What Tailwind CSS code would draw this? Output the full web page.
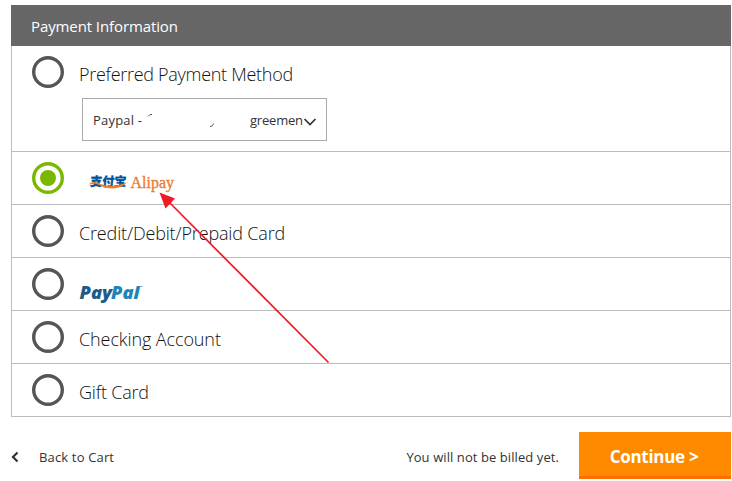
<!DOCTYPE html>
<html lang="en">
<head>
<meta charset="utf-8">
<title>Payment Information</title>
<script src="https://cdn.jsdelivr.net/npm/@tailwindcss/browser@4"></script>
</head>
<body class="relative h-[481px] w-[732px] overflow-hidden bg-white font-['Open_Sans','Noto_Sans',sans-serif] text-[#222]">
<main class="pt-[5px] pl-[11px] w-[731px]">
  <header class="flex h-[41px] items-center bg-[#666] pl-5 pt-0.5 text-[15px] tracking-[-0.1px] text-white"><h1>Payment Information</h1></header>
  <section class="border-x border-[#bcbcbc] text-[18px] font-light text-[#111]">
    <div class="h-[106px] border-b border-[#bcbcbc] pl-5 pt-2.5">
      <label class="flex h-8 items-center gap-[15px]"><svg class="size-8 shrink-0" viewBox="0 0 32 32"><circle cx="16" cy="16" r="14.300" fill="none" stroke="#555" stroke-width="3.400"/></svg><span class="pt-1 tracking-[-0.29px]">Preferred Payment Method</span></label>
      <div class="ml-[50px] mt-2.5 flex h-[43px] w-[245px] items-center border border-[#aaa] pl-2.5 text-[13px] font-normal text-[#333]">
        <span class="w-[54px] shrink-0 whitespace-nowrap pt-0.5 tracking-[0.2px]">Paypal -</span>
        <svg class="h-6 w-[102px] shrink-0" viewBox="0 0 102 24" fill="none" stroke="#555"><path d="M1 8.500l2-2h2M63 18.500c2 0 3-1 3.500-3"/></svg>
        <span class="w-[54px] shrink-0 whitespace-nowrap pl-px pt-0.5 tracking-[-0.2px]">greemen</span>
        <svg class="h-3 w-[14px] shrink-0" viewBox="0 0 14 12" fill="none" stroke="#333" stroke-width="1.700"><path d="M1.500 5l5.500 5.500 5.500-5.500"/></svg>
      </div>
    </div>
    <label class="flex h-[53px] items-start border-b border-[#bcbcbc] pl-5 pt-2.5">
      <svg class="size-8" viewBox="0 0 32 32"><circle cx="16" cy="16" r="14.300" fill="none" stroke="#7ab800" stroke-width="3.400"/><circle cx="16" cy="16" r="8" fill="#7ab800"/></svg>
      <svg class="ml-[25px] mt-[9px] h-[22px] w-[90px]" viewBox="0 0 90 22" role="img" aria-label="Alipay">
        <g transform="translate(2 0) skewX(-4)"><text x="0" y="14.500" font-family="Noto Sans CJK SC" font-size="12.500" font-weight="900" fill="#00529b" stroke="#00529b" stroke-width=".3" textLength="36" lengthAdjust="spacingAndGlyphs">支付宝</text></g>
        <path d="M.5 12.500c3-2.300 7-2 11 .4 8 3 17 2.600 26.500-1.600-6 7.700-19 7.400-27 3.200-4-2-7-2.500-10.500-.7z" fill="#f47b20"/>
        <text x="41.500" y="16.500" font-family="Liberation Serif" font-size="16.500" fill="#ec7b32" stroke="#ec7b32" stroke-width=".35" textLength="43.500" lengthAdjust="spacingAndGlyphs">Alipay</text>
      </svg>
    </label>
    <label class="flex h-[53px] items-start gap-[15px] border-b border-[#bcbcbc] pl-5 pt-2.5"><svg class="size-8 shrink-0" viewBox="0 0 32 32"><circle cx="16" cy="16" r="14.300" fill="none" stroke="#555" stroke-width="3.400"/></svg><span class="pt-[5px] tracking-[-0.16px]">Credit/Debit/Prepaid Card</span></label>
    <label class="flex h-[53px] items-start gap-[15px] border-b border-[#bcbcbc] pl-5 pt-2.5"><svg class="size-8 shrink-0" viewBox="0 0 32 32"><circle cx="16" cy="16" r="14.300" fill="none" stroke="#555" stroke-width="3.400"/></svg>
      <svg class="mt-3 h-6 w-[66px]" viewBox="0 0 66 24" role="img" aria-label="PayPal" font-family="Open Sans" font-weight="800" font-style="italic">
        <text x="0.500" y="19" font-size="17.500" fill="#1e5b88" textLength="32.500" lengthAdjust="spacingAndGlyphs">Pay</text>
        <text x="32" y="19" font-size="17.500" fill="#1d86b6" textLength="28.500" lengthAdjust="spacingAndGlyphs">Pal</text>
        <path d="M60.500 6.500h3" stroke="#7cacc8"/>
      </svg>
    </label>
    <label class="flex h-[53px] items-start gap-[15px] border-b border-[#bcbcbc] pl-5 pt-2.5"><svg class="size-8 shrink-0" viewBox="0 0 32 32"><circle cx="16" cy="16" r="14.300" fill="none" stroke="#555" stroke-width="3.400"/></svg><span class="pt-[5px] tracking-[-0.1px]">Checking Account</span></label>
    <label class="flex h-[53px] items-start gap-[15px] border-b border-[#bcbcbc] pl-5 pt-2.5"><svg class="size-8 shrink-0" viewBox="0 0 32 32"><circle cx="16" cy="16" r="14.300" fill="none" stroke="#555" stroke-width="3.400"/></svg><span class="pt-[5px] tracking-[-0.2px]">Gift Card</span></label>
  </section>
  <footer class="mt-[15px] flex h-[47px] items-center text-[13px] text-[#333]">
    <svg class="mt-0.5 h-3 w-2" viewBox="0 0 8 12" fill="none" stroke="#333" stroke-width="2.200"><path d="M6.500 1.500L2 6l4.500 4.500"/></svg>
    <a class="ml-5 mt-1 tracking-[0.16px]">Back to Cart</a>
    <span class="ml-auto mr-5 mt-1 tracking-[0.08px]">You will not be billed yet.</span>
    <button class="h-[47px] w-[152px] border-b-[3px] border-[#ff6c00] bg-[#ff8a00] pt-1.5 pr-0.5 text-[17px] font-bold tracking-[-0.3px] text-white">Continue &gt;</button>
  </footer>
</main>
<svg class="pointer-events-none absolute left-0 top-0 h-[481px] w-[732px]" viewBox="0 0 732 481"><path d="M168 201L328.500 362.500" stroke="#ed1c24" stroke-width="1.700"/><path d="M159.500 192.500l15.500 6-9.500 10z" fill="#ed1c24"/></svg>
</body>
</html>
